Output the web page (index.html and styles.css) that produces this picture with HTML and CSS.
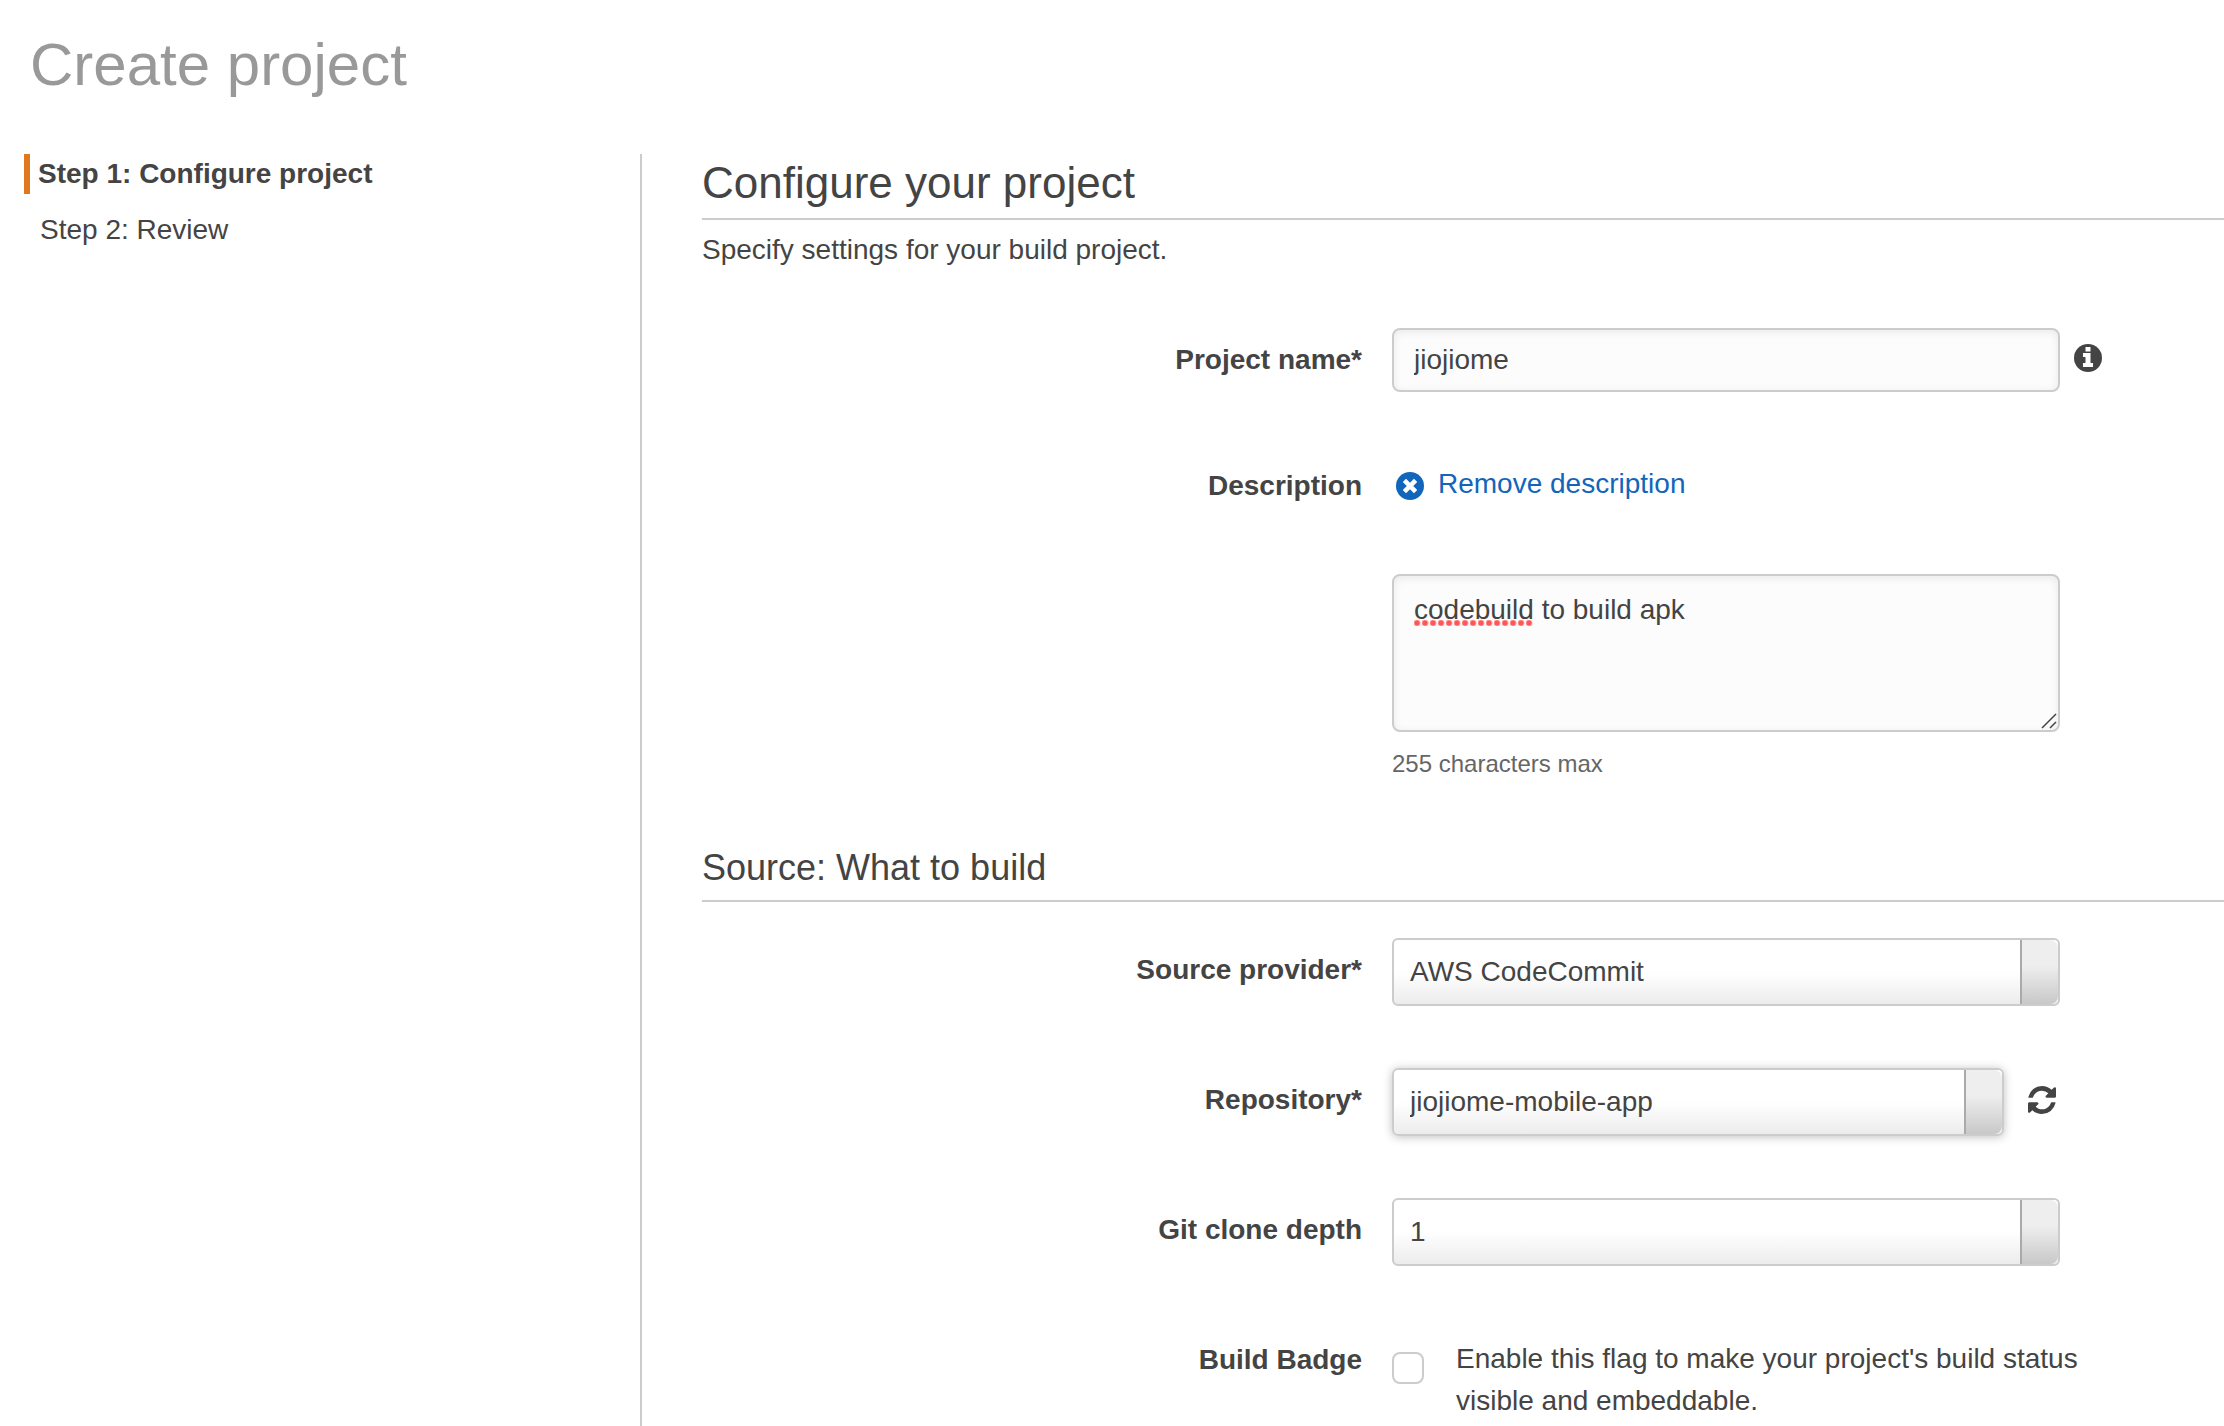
FILE: index.html
```html
<!DOCTYPE html>
<html lang="en">
<head>
    <meta charset="UTF-8">
    <meta name="viewport" content="width=device-width, initial-scale=1.0">
    <title>Create project</title>
    <link rel="stylesheet" href="styles.css">
</head>
<body>
    <h1 class="page-title">Create project</h1>
    <div class="layout">
        <nav class="sidebar">
            <ol class="steps">
                <li class="step active">Step 1: Configure project</li>
                <li class="step">Step 2: Review</li>
            </ol>
        </nav>
        <main class="content">
            <form>
                <h2 class="section-title">Configure your project</h2>
                <p class="intro">Specify settings for your build project.</p>

                <div class="form-row">
                    <label class="label" for="project-name">Project name*</label>
                    <div class="control">
                        <input class="text-input" type="text" id="project-name" value="jiojiome" spellcheck="false">
                        <button class="icon-button info" type="button" aria-label="Project name help">
                            <svg class="icon" viewBox="0 0 28 28">
                                <circle cx="14" cy="14" r="14" fill="#444"/>
                                <path d="M11.500 3h5v4.500h-5zM9 9h7.500v10H19v4H9v-4h2.500v-6H9z" fill="#fff"/>
                            </svg>
                        </button>
                    </div>
                </div>

                <div class="form-row">
                    <label class="label" for="description">Description</label>
                    <div>
                        <a class="remove-link" href="#">
                            <svg class="icon" viewBox="0 0 28 28">
                                <circle cx="14" cy="14" r="14" fill="#1166bb"/>
                                <path d="M8.400 8.400l11.200 11.200M19.600 8.400L8.400 19.600" stroke="#fff" stroke-width="4.600"/>
                            </svg>
                            <span class="remove-text">Remove description</span>
                        </a>
                        <div class="textarea-box">
                            <textarea class="text-input textarea" id="description" spellcheck="false">codebuild to build apk</textarea>
                            <span class="spelling"></span>
                            <svg class="grip" viewBox="0 0 16 16">
                                <path d="M1 15L15 1M9 15l6-6" stroke="#444" stroke-width="1.500"/>
                            </svg>
                        </div>
                        <p class="hint">255 characters max</p>
                    </div>
                </div>

                <h3 class="section-subtitle">Source: What to build</h3>

                <div class="form-row">
                    <label class="label" for="source-provider">Source provider*</label>
                    <div class="control">
                        <div class="select-box">
                            <select class="select" id="source-provider"><option>AWS CodeCommit</option></select>
                        </div>
                    </div>
                </div>

                <div class="form-row">
                    <label class="label" for="repository">Repository*</label>
                    <div class="control">
                        <div class="select-box short">
                            <select class="select hovered" id="repository"><option>jiojiome-mobile-app</option></select>
                        </div>
                        <button class="icon-button refresh" type="button" aria-label="Refresh repositories">
                            <svg class="icon" viewBox="0 0 1536 1536">
                                <path fill="#444" d="M1511 928q0 5-1 7-64 268-268 434.500t-478 166.500q-146 0-282.500-55t-243.500-157l-129 129q-19 19-45 19t-45-19-19-45v-448q0-26 19-45t45-19h448q26 0 45 19t19 45-19 45l-137 137q71 66 161 102t187 36q134 0 250-65t186-179q11-17 53-117 8-23 30-23h192q13 0 22.500 9.500t9.500 22.500zm25-800v448q0 26-19 45t-45 19h-448q-26 0-45-19t-19-45 19-45l138-138q-148-137-349-137-134 0-250 65t-186 179q-11 17-53 117-8 23-30 23h-199q-13 0-22.500-9.500t-9.500-22.500v-7q65-268 270-434.500t480-166.500q146 0 284 55.500t245 156.500l130-129q19-19 45-19t45 19 19 45z"/>
                            </svg>
                        </button>
                    </div>
                </div>

                <div class="form-row">
                    <label class="label" for="clone-depth">Git clone depth</label>
                    <div class="control">
                        <div class="select-box">
                            <select class="select" id="clone-depth"><option>1</option></select>
                        </div>
                    </div>
                </div>

                <div class="form-row">
                    <span class="label">Build Badge</span>
                    <div class="control">
                        <input class="checkbox" type="checkbox" id="build-badge">
                        <label class="checkbox-text" for="build-badge">Enable this flag to make your project's build status visible and embeddable.</label>
                    </div>
                </div>
            </form>
        </main>
    </div>
</body>
</html>
```

FILE: styles.css
```css
* {
    box-sizing: border-box;
}

body {
    font-family: "Helvetica Neue", "Liberation Sans", Arial, sans-serif;
    font-size: 28px;
    line-height: 40px;
    color: #444;
    background: #fff;
    margin: 0;
    display: flex;
    flex-direction: column;
    min-height: 100vh;
}

.page-title {
    margin: 0;
    padding: 32px 30px 56px;
    font-size: 60px;
    line-height: 66px;
    font-weight: normal;
    color: #999;
}

.layout {
    flex: 1;
    display: grid;
    grid-template-columns: 616px minmax(0, 1fr);
    padding-left: 24px;
}

/* Steps */

.steps {
    list-style: none;
    margin: 0;
    padding: 0;
}

.step {
    margin-bottom: 16px;
    padding-left: 16px;
}

.step.active {
    border-left: 6px solid #e07820;
    padding-left: 8px;
    font-weight: bold;
}

/* Form */

.content {
    border-left: 2px solid #ccc;
    padding-left: 60px;
}

.section-title {
    margin: 0;
    padding-bottom: 6px;
    font-size: 44px;
    line-height: 58px;
    font-weight: normal;
    border-bottom: 2px solid #ccc;
}

.section-subtitle {
    margin: 64px 0 36px;
    padding-bottom: 8px;
    font-size: 36px;
    line-height: 48px;
    font-weight: normal;
    border-bottom: 2px solid #ccc;
}

.intro {
    margin: 10px 0 58px;
}

.form-row {
    display: grid;
    grid-template-columns: minmax(0, 165fr) minmax(0, 208fr);
    column-gap: 30px;
}

.form-row + .form-row {
    margin-top: 62px;
}

.label {
    font-weight: bold;
    line-height: 64px;
    text-align: right;
}

.control {
    display: flex;
    align-items: flex-start;
}

.text-input {
    flex: 0 1 668px;
    min-width: 0;
    height: 64px;
    padding: 0 20px;
    font: inherit;
    color: #444;
    background: #fcfcfc;
    border: 2px solid #ccc;
    border-radius: 8px;
    box-shadow: inset 0 2px 8px rgba(0, 0, 0, 0.08);
}

.textarea-box {
    position: relative;
    max-width: 668px;
    margin-top: 56px;
}

.textarea {
    display: block;
    width: 100%;
    height: 158px;
    padding: 14px 20px;
    resize: none;
}

/* red dots under the misspelled word */
.spelling {
    position: absolute;
    left: 22px;
    top: 46px;
    width: 120px;
    height: 6px;
    background: radial-gradient(circle at 3px 3px, #ff5555 2px, transparent 4px) repeat-x;
    background-size: 8px 6px;
    pointer-events: none;
}

.grip {
    position: absolute;
    right: 3px;
    bottom: 3px;
    width: 16px;
    height: 16px;
    pointer-events: none;
}

.hint {
    margin: 16px 0 0;
    font-size: 24px;
    line-height: 32px;
    color: #666;
}

.remove-link {
    display: flex;
    align-items: flex-start;
    gap: 14px;
    height: 64px;
    padding: 18px 4px 0;
    color: #1166bb;
    text-decoration: none;
}

.remove-text {
    line-height: 24px;
}

.icon {
    display: block;
    flex: none;
    width: 28px;
    height: 28px;
}

.icon-button {
    background: none;
    border: none;
    padding: 0;
    cursor: pointer;
}

.info {
    margin: 16px 0 0 14px;
}

.refresh {
    margin: 18px 0 0 24px;
}

.select-box {
    position: relative;
    flex: 0 1 668px;
}

.select-box.short {
    flex-basis: 612px;
}

.select {
    appearance: none;
    display: block;
    width: 100%;
    height: 68px;
    padding: 0 56px 0 16px;
    font: inherit;
    color: #444;
    background: linear-gradient(#fff 50%, #ececec);
    border: 2px solid #ccc;
    border-radius: 6px;
}

.select.hovered {
    box-shadow: 0 1px 10px rgba(0, 0, 0, 0.25);
}

.select-box::after {
    content: "";
    position: absolute;
    top: 2px;
    right: 2px;
    bottom: 2px;
    width: 36px;
    background: linear-gradient(#eee 40%, #c8c8c8);
    border-left: 2px solid #aaa;
    border-radius: 0 8px 8px 0;
    pointer-events: none;
}

.checkbox {
    appearance: none;
    flex: none;
    width: 32px;
    height: 32px;
    margin: 24px 32px 0 0;
    background: #fff;
    border: 2px solid #ccc;
    border-radius: 8px;
}

.checkbox-text {
    max-width: 680px;
    margin-top: 10px;
    line-height: 42px;
}
```
